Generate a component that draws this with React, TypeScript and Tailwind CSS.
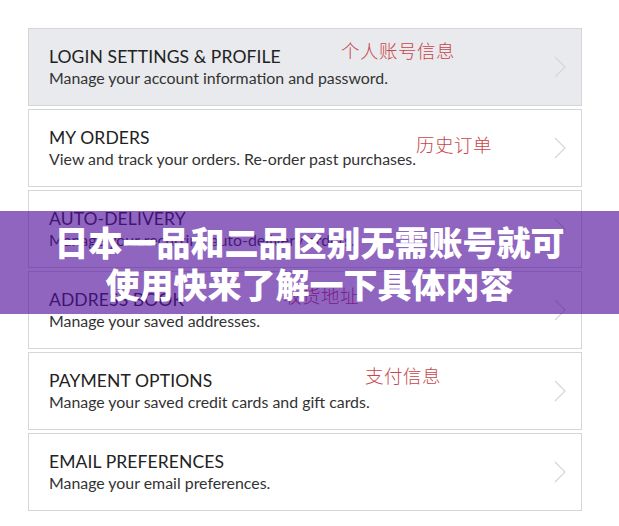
import React from "react";

type Item = {
  title: string;
  desc: string;
  note?: string;
  noteLeft?: number;
  noteTop?: number;
  active?: boolean;
};

const items: Item[] = [
  { title: "LOGIN SETTINGS & PROFILE", desc: "Manage your account information and password.", note: "个人账号信息", noteLeft: 312, noteTop: 11, active: true },
  { title: "MY ORDERS", desc: "View and track your orders. Re-order past purchases.", note: "历史订单", noteLeft: 387, noteTop: 24 },
  { title: "AUTO-DELIVERY", desc: "Manage your recurring auto-delivery orders." },
  { title: "ADDRESS BOOK", desc: "Manage your saved addresses.", note: "收货地址", noteLeft: 254, noteTop: 13 },
  { title: "PAYMENT OPTIONS", desc: "Manage your saved credit cards and gift cards.", note: "支付信息", noteLeft: 336, noteTop: 12 },
  { title: "EMAIL PREFERENCES", desc: "Manage your email preferences." },
];

function Chevron() {
  return (
    <svg width="12" height="22" viewBox="0 0 12 22" className="shrink-0">
      <polyline points="1,1 11,11 1,21" fill="none" stroke="#d6d6d6" strokeWidth="1.2" />
    </svg>
  );
}

export default function App() {
  return (
    <div className="relative w-[619px] h-[526px] bg-white overflow-hidden" style={{ fontFamily: "Lato, 'Noto Sans', sans-serif" }}>
      <div className="flex flex-col gap-[3px] pt-[28px] pl-[28px] w-[582px]">
        {items.map((it) => (
          <div
            key={it.title}
            className={`relative h-[78px] border border-[#d4d6d8] flex items-center justify-between pl-[20px] pr-[15px] ${it.active ? "bg-[#e8eaed]" : "bg-white"}`}
          >
            <div className="flex flex-col -mt-[1px]">
              <div className="text-[17.5px] leading-[22px] text-[#222] tracking-[0.1px]">{it.title}</div>
              <div className="text-[15.9px] leading-[20px] text-[#333]">{it.desc}</div>
            </div>
            <Chevron />
            {it.note && (
              <div
                className="absolute text-[18.5px] leading-[20px] text-[#c8454a] font-light tracking-[0.5px]"
                style={{ left: it.noteLeft, top: it.noteTop, fontFamily: "'Noto Sans CJK SC', sans-serif" }}
              >
                {it.note}
              </div>
            )}
          </div>
        ))}
      </div>
      <div className="absolute left-0 right-0 top-[211px] h-[103px] bg-[rgba(80,14,156,0.64)] flex flex-col items-center justify-center">
        <div
          className="text-white font-black text-[34px] leading-[42px] text-center"
          style={{ fontFamily: "'Noto Sans CJK SC', sans-serif" }}
        >
          <div>日本一品和二品区别无需账号就可</div>
          <div>使用快来了解一下具体内容</div>
        </div>
      </div>
    </div>
  );
}
